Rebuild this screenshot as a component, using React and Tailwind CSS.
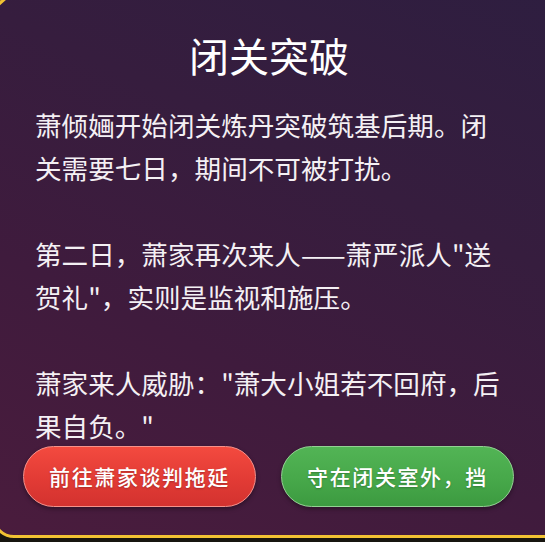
import React from 'react'

const story = `萧倾婳开始闭关炼丹突破筑基后期。闭关需要七日，期间不可被打扰。

第二日，萧家再次来人——萧严派人"送贺礼"，实则是监视和施压。

萧家来人威胁："萧大小姐若不回府，后果自负。"`

const choices = [
    {
        label: '前往萧家谈判拖延',
        cls: 'bg-[linear-gradient(180deg,#f34a3f_0%,#e23b35_55%,#d3322f_100%)] border-[#f6918a]',
    },
    {
        label: '守在闭关室外，挡',
        cls: 'bg-[linear-gradient(180deg,#52b455_0%,#47a84a_55%,#3c9a40_100%)] border-[#93d293]',
    },
]

const App = () => {
    return (
        <div className="w-[545px] h-[542px] overflow-hidden bg-[#17150f]" style={{ fontFamily: '"Noto Sans CJK SC", "Noto Sans", sans-serif' }}>
            <div className="relative -ml-[8px] -mt-[8px] w-[575px] h-[546px] rounded-[22px] border-[3px] border-[#f2c233] bg-[linear-gradient(205deg,#2e1e40_0%,#361d3e_35%,#3f1b3d_65%,#4a1c3d_100%)]">
                {/* small gold ornament on the corner */}
                <svg className="absolute left-0 top-0" width="14" height="14" viewBox="0 0 14 14">
                    <path d="M3 10 L12 2" stroke="#f2c233" strokeWidth="3" strokeLinecap="round" />
                </svg>

                <div className="ml-[28px] w-[492px] pt-[36px]">
                    <h1 className="text-[40px] leading-[48px] text-center text-white font-normal">闭关突破</h1>

                    <p className="mt-[24px] ml-[12px] w-[470px] text-[26.6px] leading-[43px] text-[#f4f0f4] whitespace-pre-line">
                        {story}
                    </p>

                    <div className="flex gap-[25px] -mt-[1px]">
                        {choices.map((c) => (
                            <button
                                key={c.label}
                                className={`w-[233px] h-[61px] rounded-full border-[1.5px] overflow-hidden whitespace-nowrap text-white text-[21px] tracking-[1.6px] font-medium shadow-[0_2px_4px_rgba(0,0,0,0.35)] [text-shadow:0_1px_2px_rgba(0,0,0,0.25)] ${c.cls}`}
                            >
                                {c.label}
                            </button>
                        ))}
                    </div>
                </div>
            </div>
        </div>
    )
}

export default App
